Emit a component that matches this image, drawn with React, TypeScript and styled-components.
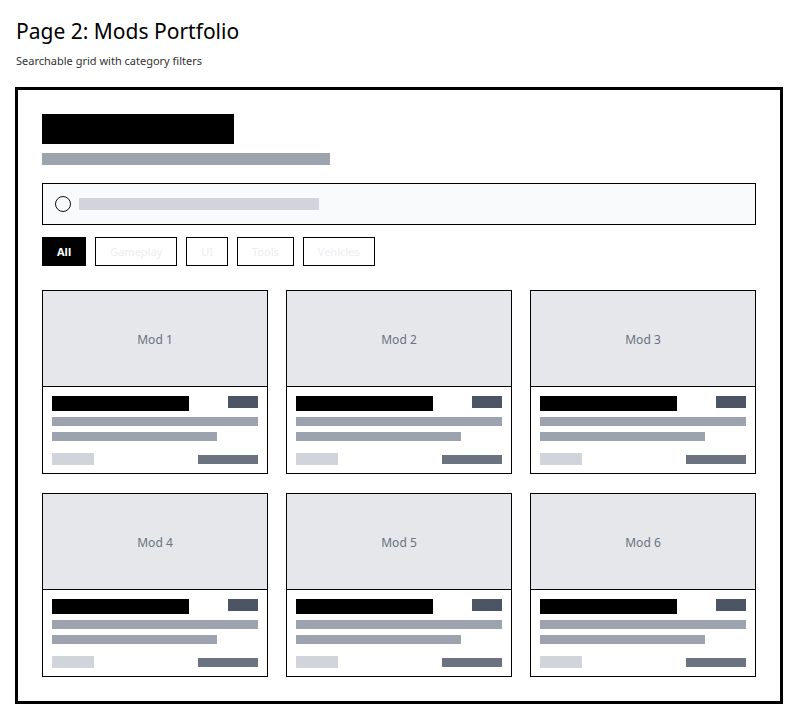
import React from 'react';
import styled, { createGlobalStyle } from 'styled-components';

const GlobalStyle = createGlobalStyle`
  * {
    box-sizing: border-box;
  }
  body {
    margin: 0;
    background: #ffffff;
    font-family: "Noto Sans", "Open Sans", Arial, sans-serif;
    color: #000;
  }
`;

const Page = styled.div`
  padding: 16px 14px 12px 15px;
`;

const PageTitle = styled.h1`
  margin: 0 0 0 1px;
  font-size: 21px;
  line-height: 30px;
  font-weight: 400;
  color: #000;
`;

const PageSubtitle = styled.p`
  margin: 7px 0 0 1px;
  font-size: 11px;
  line-height: 16px;
  color: #333;
`;

const Frame = styled.div`
  margin-top: 18px;
  width: 768px;
  border: 3px solid #000;
  padding: 24px;
`;

const Block = styled.div<{ $w: number; $h: number; $color: string }>`
  width: ${p => p.$w}px;
  height: ${p => p.$h}px;
  background: ${p => p.$color};
  flex-shrink: 0;
`;

const Heading = styled.div`
  display: flex;
  flex-direction: column;
  gap: 9px;
`;

const Search = styled.div`
  margin-top: 18px;
  height: 42px;
  border: 1px solid #000;
  background: #f9fafb;
  padding: 0 12px;
  display: flex;
  align-items: center;
  gap: 8px;
`;

const SearchIcon = styled.span`
  width: 16px;
  height: 16px;
  border: 1.5px solid #111;
  border-radius: 50%;
  flex-shrink: 0;
`;

const Filters = styled.div`
  margin-top: 12px;
  display: flex;
  gap: 9px;
`;

const Chip = styled.button<{ $active?: boolean }>`
  height: 29px;
  padding: 0 14px;
  border: 1px solid #000;
  background: ${p => (p.$active ? '#000' : '#fff')};
  color: ${p => (p.$active ? '#fff' : '#eceef1')};
  font-family: "Noto Sans", Arial, sans-serif;
  font-size: 11px;
  font-weight: ${p => (p.$active ? 700 : 400)};
  cursor: pointer;
`;

const Grid = styled.div`
  margin-top: 24px;
  display: grid;
  grid-template-columns: repeat(3, 1fr);
  column-gap: 18px;
  row-gap: 19px;
`;

const Card = styled.div`
  border: 1px solid #000;
  background: #fff;
`;

const Thumb = styled.div`
  height: 96px;
  padding-top: 2px;
  background: #e5e7eb;
  border-bottom: 1px solid #000;
  display: flex;
  align-items: center;
  justify-content: center;
  font-size: 12px;
  color: #6b7280;
`;

const CardBody = styled.div`
  padding: 9px 9px 8px;
`;

const TopRow = styled.div`
  display: flex;
  justify-content: space-between;
  align-items: flex-start;
`;

const Line = styled.div<{ $w: string }>`
  margin-top: 6px;
  height: 9px;
  width: ${p => p.$w};
  background: #9ca3af;
`;

const Footer = styled.div`
  margin-top: 12px;
  display: flex;
  justify-content: space-between;
  align-items: center;
`;

const categories = ['All', 'Gameplay', 'UI', 'Tools', 'Vehicles'];
const mods = [1, 2, 3, 4, 5, 6];

const App: React.FC = () => {
  return (
    <>
      <GlobalStyle />
      <Page>
        <PageTitle>Page 2: Mods Portfolio</PageTitle>
        <PageSubtitle>Searchable grid with category filters</PageSubtitle>
        <Frame>
          <Heading>
            <Block $w={192} $h={30} $color="#000" />
            <Block $w={288} $h={12} $color="#9ca3af" />
          </Heading>
          <Search>
            <SearchIcon />
            <Block $w={240} $h={12} $color="#d1d5db" />
          </Search>
          <Filters>
            {categories.map((c, i) => (
              <Chip key={c} $active={i === 0}>{c}</Chip>
            ))}
          </Filters>
          <Grid>
            {mods.map(n => (
              <Card key={n}>
                <Thumb>Mod {n}</Thumb>
                <CardBody>
                  <TopRow>
                    <Block $w={137} $h={15} $color="#000" />
                    <Block $w={30} $h={12} $color="#4b5563" />
                  </TopRow>
                  <Line $w="100%" />
                  <Line $w="80%" />
                  <Footer>
                    <Block $w={42} $h={12} $color="#d1d5db" />
                    <Block $w={60} $h={9} $color="#6b7280" />
                  </Footer>
                </CardBody>
              </Card>
            ))}
          </Grid>
        </Frame>
      </Page>
    </>
  );
};

export default App;
